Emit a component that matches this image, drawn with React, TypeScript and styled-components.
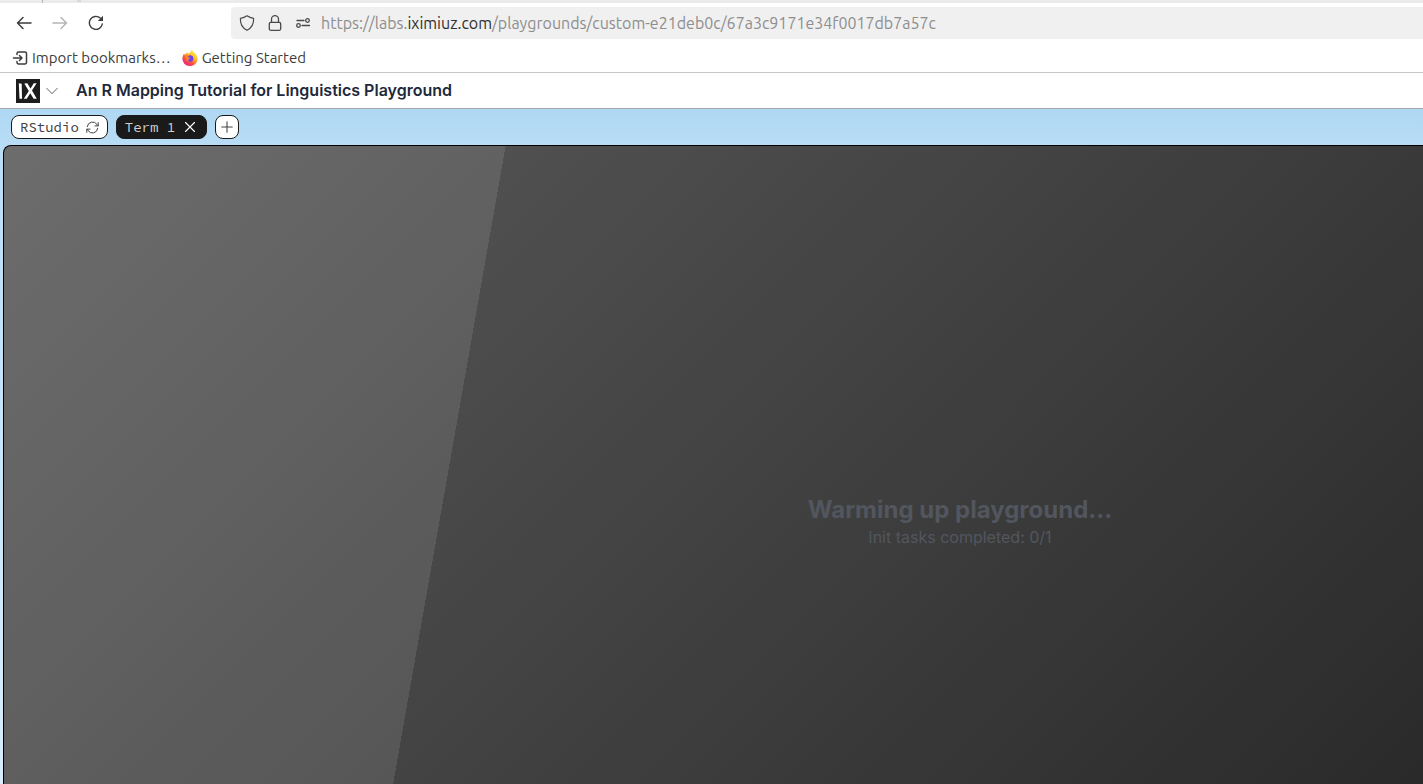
import React from "react";
import styled, { createGlobalStyle } from "styled-components";

const GlobalStyle = createGlobalStyle`
  * { box-sizing: border-box; }
  html, body, #root { height: 100%; margin: 0; }
  body { overflow: hidden; background: #fff; }
  button { padding: 0; margin: 0; border: 0; background: none; color: inherit; font: inherit; cursor: pointer; }
  a { color: inherit; text-decoration: none; }
  svg { display: block; flex: none; }
`;

const uiFont = `Ubuntu, "Noto Sans", sans-serif`;
const monoFont = `"Source Code Pro", "Liberation Mono", monospace`;

const Page = styled.div`
  display: flex;
  flex-direction: column;
  height: 100%;
  font-family: Inter, sans-serif;
`;

const TabStrip = styled.div`
  display: flex;
  flex: none;
  height: 3px;
  background: #ebebeb;
`;

const TabDivider = styled.span`
  width: 43px;
  border-right: 1px solid #b4b4b4;
`;

const TabMark = styled.span`
  width: 4px;
  height: 2px;
  margin-left: 34px;
  background: #d8d8d8;
`;

const NavBar = styled.div`
  display: flex;
  flex: none;
  align-items: center;
  height: 40px;
  padding-left: 16px;
`;

const NavButtons = styled.div`
  display: flex;
  gap: 20px;
  flex: none;
  width: 215px;
`;

const NavButton = styled.button`
  width: 16px;
  height: 16px;
  color: #3d3d3d;
  &:disabled { color: #b5b5b5; }
`;

const AddressBar = styled.div`
  display: flex;
  flex: 1;
  align-items: center;
  height: 32px;
  padding-left: 8px;
  gap: 12px;
  color: #4a4a4a;
  background: #f0f0f0;
  border-radius: 4px 0 0 4px;
`;

const Url = styled.div`
  margin-left: -2px;
  font: 16px/20px ${uiFont};
  color: #8e8e8e;
  white-space: nowrap;
  outline: none;
`;

const Domain = styled.span`
  color: #2e2e2e;
`;

const Bookmarks = styled.nav`
  display: flex;
  flex: none;
  align-items: center;
  gap: 11px;
  height: 30px;
  padding-left: 12px;
  border-bottom: 1px solid #c6c6c6;
`;

const Bookmark = styled.a`
  display: flex;
  align-items: center;
  gap: 4px;
  font: 15px/20px ${uiFont};
  color: #3d3d3d;
`;

const Header = styled.header`
  display: flex;
  flex: none;
  align-items: center;
  height: 36px;
  padding-left: 16px;
  border-bottom: 1px solid #a9a9a9;
`;

const LogoButton = styled.button`
  display: flex;
  align-items: center;
  gap: 6px;
  margin-right: 18px;
  color: #949494;
`;

const Title = styled.h1`
  margin: 0;
  padding-bottom: 2px;
  font-size: 16px;
  line-height: 24px;
  font-weight: 600;
  color: #1e293b;
`;

const Workspace = styled.main`
  display: flex;
  flex: 1;
  flex-direction: column;
  padding-left: 3px;
  background: linear-gradient(#afd8f4, #b9ddf6 40px, #d9edfb 700px);
`;

const Tabs = styled.div`
  display: flex;
  flex: none;
  align-items: center;
  gap: 8px;
  height: 36px;
  padding-left: 8px;
`;

const Tab = styled.button<{ $active?: boolean }>`
  display: flex;
  align-items: center;
  justify-content: center;
  gap: 7px;
  height: 24px;
  padding: 0 8px;
  border: 1px solid #1a1a1a;
  border-radius: 8px;
  background: ${(p) => (p.$active ? "#1a1a1a" : "#fff")};
  color: ${(p) => (p.$active ? "#d0d0d0" : "#404040")};
  font: 14px/20px ${monoFont};
`;

const AddTab = styled(Tab)`
  width: 24px;
  padding: 0;
`;

const Screen = styled.section`
  display: flex;
  flex: 1;
  flex-direction: column;
  align-items: center;
  padding: 348px 0 0 493px;
  border: 1px solid #000;
  border-width: 1px 0 0 1px;
  border-top-left-radius: 8px;
  color: #52565e;
  background:
    linear-gradient(100deg, rgba(255, 255, 255, 0.1) 494px, transparent 494px),
    linear-gradient(135deg, #5c5c5c, #2a2a2a);
`;

const Status = styled.h2`
  margin: 0;
  font-size: 24px;
  line-height: 32px;
  font-weight: 700;
`;

const Progress = styled.p`
  margin: 0;
  font-size: 16px;
  line-height: 22px;
`;

const Icon = ({ size = 16, width = 1.4, children }: { size?: number; width?: number; children: React.ReactNode }) => (
  <svg width={size} height={size} viewBox="0 0 16 16" fill="none" stroke="currentColor" strokeWidth={width} strokeLinecap="round" strokeLinejoin="round" aria-hidden="true">
    {children}
  </svg>
);

const Firefox = () => (
  <svg width="16" height="16" viewBox="0 0 16 16" aria-hidden="true">
    <defs>
      <linearGradient id="flame" x1="0.85" y1="0.1" x2="0.25" y2="0.95">
        <stop offset="0" stopColor="#fff04a" />
        <stop offset="0.35" stopColor="#ffc02a" />
        <stop offset="0.65" stopColor="#ff5a36" />
        <stop offset="1" stopColor="#f0207e" />
      </linearGradient>
    </defs>
    <path d="M10 0c.5 1.300 1.900 2 3 3.300 1.700 1.700 2.700 3.700 2.600 6A7.600 7.100 0 0 1 .4 8.500c0-2 .8-3.700 1.800-5 .1.700.3 1.100.7 1.400C3.400 3.800 4.500 3 5.300 2.200c0 .8.2 1.300.7 1.600C7.800 3.400 8.500 1.500 10 0z" fill="url(#flame)" />
    <circle cx="8" cy="8.600" r="3.300" fill="#6b45e8" />
    <path d="M3.800 5.300c1.500-.8 3.200-.4 4 .7-1 0-1.800.4-2.200 1 .8.800 2 .2 2.700.9-.4 1.500-2 1.500-2.600 1.500.5.900 1.200 1.600 2 1.900-2.500.6-4.900-2-3.900-6z" fill="#ff8a20" />
  </svg>
);

export default function App() {
  return (
    <Page>
      <GlobalStyle />
      <TabStrip>
        <TabDivider />
        <TabMark />
      </TabStrip>
      <NavBar>
        <NavButtons>
          <NavButton aria-label="Back">
            <Icon width={1.5}><path d="M15 8H1.500M7 2.500 1.500 8 7 13.500" /></Icon>
          </NavButton>
          <NavButton aria-label="Forward" disabled>
            <Icon width={1.5}><path d="M1 8h13.500M9 2.500 14.500 8 9 13.500" /></Icon>
          </NavButton>
          <NavButton aria-label="Reload">
            <Icon>
              <path d="M14.300 9A6.500 6.500 0 1 1 12.300 3.100" />
              <path d="M15 .8v5.200H9.800z" fill="currentColor" stroke="none" />
            </Icon>
          </NavButton>
        </NavButtons>
        <AddressBar>
          <Icon width={1.2}><path d="M8 .8c2 1.500 4 2.200 6.600 2.500.3 5-1.600 9.500-6.600 12-5-2.500-6.900-7-6.600-12C4 3 6 2.300 8 .8z" /></Icon>
          <Icon width={1.3}>
            <rect x="2.300" y="7.300" width="11.400" height="8" rx="1.500" />
            <path d="M4.500 7.300V4.200a3.500 3.500 0 0 1 7 0v3.100" />
          </Icon>
          <Icon width={1.3}>
            <path d="M2 5.500h7M7 10.500h7.500" />
            <circle cx="12.500" cy="5.500" r="1.800" />
            <circle cx="3.500" cy="10.500" r="1.800" />
          </Icon>
          <Url role="textbox" aria-label="Address" contentEditable suppressContentEditableWarning spellCheck={false}>
            https://labs.<Domain>iximiuz.com</Domain>/playgrounds/custom-e21deb0c/67a3c9171e34f0017db7a57c
          </Url>
        </AddressBar>
      </NavBar>
      <Bookmarks aria-label="Bookmarks">
        <Bookmark href="#import">
          <Icon width={1.5}>
            <path d="M5 4.500v-1a1.500 1.500 0 0 1 1.500-1.500H13A1.500 1.500 0 0 1 14.500 3.500v9A1.500 1.500 0 0 1 13 14H6.500A1.500 1.500 0 0 1 5 12.500v-1" />
            <path d="M1.500 8H10M7.500 5.500 10 8 7.500 10.500" />
          </Icon>
          Import bookmarks…
        </Bookmark>
        <Bookmark href="#start"><Firefox />Getting Started</Bookmark>
      </Bookmarks>
      <Header>
        <LogoButton aria-label="Menu">
          <svg width="24" height="24" viewBox="0 0 24 24" aria-hidden="true">
            <path d="M0 0h24v24H0z" fill="#1d1d1d" />
            <path d="M2.800 4.200 5.700 4.700 6 19.800H3.500zM8.300 4.600l3-.4 3.200 5.200 3.300-5.200h2.800l-4.600 7.400 4.800 8.200h-3.200l-3.300-5.600-3.600 5.600H7.800l5-7.900z" fill="#fff" />
          </svg>
          <Icon size={12} width={1.4}><path d="m1 4.500 7 7 7-7" /></Icon>
        </LogoButton>
        <Title>An R Mapping Tutorial for Linguistics Playground</Title>
      </Header>
      <Workspace>
        <Tabs>
          <Tab>
            RStudio
            <Icon size={13} width={1.2}>
              <path d="M1.500 7a6.600 6.600 0 0 1 12-2.800L15 6M15 2v4h-4M14.500 9a6.600 6.600 0 0 1-12 2.800L1 10M1 14v-4h4" />
            </Icon>
          </Tab>
          <Tab $active>
            Term 1
            <Icon size={16} width={1.1}><path d="m3.500 3.500 9 9M12.500 3.500l-9 9" stroke="#fff" /></Icon>
          </Tab>
          <AddTab aria-label="New tab"><Icon size={14} width={1.2}><path d="M8 2v12M2 8h12" /></Icon></AddTab>
        </Tabs>
        <Screen>
          <Status>Warming up playground...</Status>
          <Progress>Init tasks completed: 0/1</Progress>
        </Screen>
      </Workspace>
    </Page>
  );
}
